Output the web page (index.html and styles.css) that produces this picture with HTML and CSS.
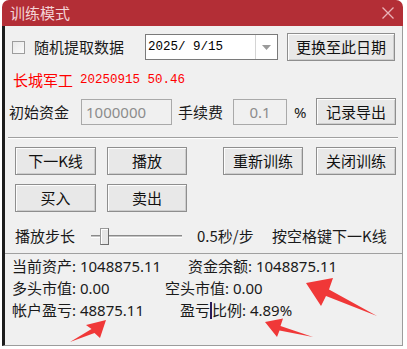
FILE: index.html
```html
<!DOCTYPE html>
<html lang="zh-CN">
<head>
    <meta charset="UTF-8">
    <title>训练模式</title>
    <link rel="stylesheet" href="styles.css">
</head>
<body>
    <div class="window">
        <div class="titlebar">
            <span class="title">训练模式</span>
            <svg class="close" width="12" height="12" viewBox="0 0 12 12">
                <path d="M0.5 0.5 L11.5 11.5 M11.5 0.5 L0.5 11.5" stroke="#e9b3b8" stroke-width="1.3" fill="none"/>
            </svg>
        </div>

        <div class="client">
            <div class="row row-date">
                <span class="checkbox"></span>
                <span class="label label-random">随机提取数据</span>
                <div class="combo">
                    <span class="combo-text">2025/ 9/15</span>
                    <span class="combo-btn">
                        <svg width="9" height="5" viewBox="0 0 9 5"><path d="M0 0 L9 0 L4.5 5 Z" fill="#9a9a9a"/></svg>
                    </span>
                </div>
                <button class="btn btn-date">更换至此日期</button>
            </div>

            <div class="row row-stock">
                <span class="stock-name">长城军工</span>
                <span class="stock-info">20250915 50.46</span>
            </div>

            <div class="row row-fund">
                <span class="label label-fund">初始资金</span>
                <span class="field field-fund">1000000</span>
                <span class="label label-fee">手续费</span>
                <span class="field field-fee">0.1</span>
                <span class="percent">%</span>
                <button class="btn btn-export">记录导出</button>
            </div>

            <div class="sep"></div>

            <div class="row row-btns">
                <button class="btn btn-action">下一K线</button>
                <button class="btn btn-action btn-second">播放</button>
                <button class="btn btn-action btn-restart">重新训练</button>
                <button class="btn btn-action btn-close">关闭训练</button>
            </div>

            <div class="row row-btns row-trade">
                <button class="btn btn-action">买入</button>
                <button class="btn btn-action btn-second">卖出</button>
            </div>

            <div class="row row-speed">
                <span class="label label-step">播放步长</span>
                <div class="slider">
                    <span class="track track-left"></span>
                    <span class="thumb"></span>
                    <span class="track track-right"></span>
                </div>
                <span class="speed-value">0.5秒/步</span>
                <span class="hint">按空格键下一K线</span>
            </div>

            <div class="panel">
                <div class="stat-row">
                    <span class="stat stat-a1">当前资产: 1048875.11</span>
                    <span class="stat">资金余额: 1048875.11</span>
                </div>
                <div class="stat-row">
                    <span class="stat stat-b1">多头市值: 0.00</span>
                    <span class="stat">空头市值: 0.00</span>
                </div>
                <div class="stat-row">
                    <span class="stat stat-c1">帐户盈亏: 48875.11</span>
                    <span class="stat">盈亏<span class="caret"></span>比例: 4.89%</span>
                </div>
            </div>
        </div>
    </div>

    <!-- annotation arrows drawn on top of the screenshot -->
    <svg class="arrows" width="407" height="349" viewBox="0 0 407 349">
        <polygon points="306,283 333,278 329,289.5 377,316 326,296 321,306" fill="#f03838"/>
        <polygon points="106,320 86,325 91.5,329 70,342 94.5,333 100,338" fill="#f03838"/>
        <polygon points="265,322 283,318.5 280.5,326 313,337 279.5,330.5 277,337" fill="#f03838"/>
    </svg>
</body>
</html>
```

FILE: styles.css
```css
* {
    margin: 0;
    padding: 0;
    box-sizing: border-box;
}

body {
    position: relative;
    width: 407px;
    height: 349px;
    background: #ffffff;
    font-family: "Noto Sans CJK SC", sans-serif;
    font-size: 15px;
    color: #1a1a1a;
    overflow: hidden;
}

.window {
    margin-left: 2px;
    width: 401px;
}

.titlebar {
    height: 26px;
    background: #b32e36;
    border-radius: 7px 7px 0 0;
    display: flex;
    align-items: center;
    padding-left: 8px;
    padding-right: 9px;
}

.title {
    color: #f3d4d7;
    font-size: 15px;
    line-height: 20px;
    flex: 1;
}

.close {
    display: block;
}

.client {
    height: 320px;
    background: #f0f0f0;
    border-left: 3px solid #1c1c1c;
    border-right: 1px solid #9c9c9c;
    border-bottom: 1px solid #9c9c9c;
    display: flex;
    flex-direction: column;
}

.row {
    display: flex;
    align-items: center;
}

.label {
    line-height: 20px;
    white-space: nowrap;
}

/* ---- date row ---- */
.row-date {
    margin-top: 7px;
    height: 28px;
}

.checkbox {
    width: 13px;
    height: 13px;
    margin-left: 7px;
    border: 1px solid #9d9d9d;
    background: linear-gradient(135deg, #e9e9e9, #fbfbfb);
}

.label-random {
    margin-left: 9px;
    width: 111px;
}

.combo {
    width: 133px;
    height: 26px;
    background: #ffffff;
    border: 1px solid #7a7a7a;
    display: flex;
    align-items: stretch;
}

.combo-text {
    flex: 1;
    padding-left: 2px;
    font-family: "Liberation Mono", monospace;
    font-size: 12.5px;
    line-height: 24px;
    color: #000;
}

.combo-btn {
    width: 22px;
    border-left: 1px solid #d4d4d4;
    display: flex;
    align-items: center;
    justify-content: center;
}

.combo-btn svg {
    display: block;
}

.btn {
    font-family: "Noto Sans CJK SC", sans-serif;
    font-size: 15px;
    line-height: 20px;
    color: #111;
    background: #e8e8e8;
    border: 1px solid #8e8e8e;
    box-shadow: inset 1px 1px 0 #fdfdfd, inset -1px -1px 0 #cdcdcd;
    text-align: center;
}

.btn-date {
    margin-left: 9px;
    width: 108px;
    height: 28px;
}

/* ---- stock row ---- */
.row-stock {
    margin-top: 7px;
    height: 24px;
    color: #ff0000;
}

.stock-name {
    margin-left: 8px;
    width: 67px;
    line-height: 20px;
}

.stock-info {
    font-family: "Liberation Mono", monospace;
    font-size: 12.5px;
    line-height: 20px;
}

/* ---- fund row ---- */
.row-fund {
    margin-top: 6px;
    height: 28px;
}

.label-fund {
    margin-left: 4px;
    width: 72px;
}

.field {
    height: 26px;
    border: 1px solid #a9a9a9;
    background: #f0f0f0;
    color: #8c8c8c;
    font-family: "Noto Sans", sans-serif;
    font-size: 15px;
    line-height: 24px;
}

.field-fund {
    width: 91px;
    padding-left: 4px;
}

.label-fee {
    margin-left: 6px;
    width: 55px;
}

.field-fee {
    width: 54px;
    text-align: center;
}

.percent {
    margin-left: 7px;
    width: 22px;
    font-family: "Noto Sans", sans-serif;
    line-height: 20px;
}

.btn-export {
    width: 80px;
    height: 27px;
    align-self: flex-start;
}

.sep {
    margin: 11px 0 0 3px;
    width: 390px;
    height: 2px;
    border-top: 1px solid #a0a0a0;
    border-bottom: 1px solid #ffffff;
}

/* ---- action buttons ---- */
.row-btns {
    margin-top: 8px;
    height: 28px;
}

.row-trade {
    margin-top: 9px;
}

.btn-action {
    width: 81px;
    height: 28px;
}

.row-btns .btn-action:first-child {
    margin-left: 10px;
}

.btn-second {
    margin-left: 11px;
    width: 80px;
}

.btn-restart {
    margin-left: 36px;
    width: 80px;
}

.btn-close {
    margin-left: 13px;
    width: 80px;
}

/* ---- speed row ---- */
.row-speed {
    margin-top: 14px;
    height: 20px;
}

.label-step {
    margin-left: 10px;
    width: 76px;
}

.slider {
    width: 91px;
    height: 20px;
    display: flex;
    align-items: center;
}

.track {
    height: 3px;
    border-top: 1px solid #8a8a8a;
    border-bottom: 1px solid #ffffff;
    background: #c4c4c4;
}

.track-left {
    width: 9px;
}

.track-right {
    flex: 1;
}

.thumb {
    width: 9px;
    height: 17px;
    background: #e6e6e6;
    border: 1px solid #9a9a9a;
    border-right-color: #6e6e6e;
    border-bottom-color: #6e6e6e;
    box-shadow: inset 1px 1px 0 #ffffff;
}

.speed-value {
    margin-left: 15px;
    width: 75px;
    line-height: 20px;
    white-space: nowrap;
}

.hint {
    line-height: 20px;
    white-space: nowrap;
}

/* ---- statistics panel ---- */
.panel {
    margin-top: 7px;
    flex: 1;
    border-top: 1px solid #a0a0a0;
    padding: 1px 0 0 7px;
    font-family: "Noto Sans", "Noto Sans CJK SC", sans-serif;
    font-size: 15px;
}

.stat-row {
    display: flex;
    height: 22px;
    align-items: center;
}

.stat {
    line-height: 20px;
    white-space: nowrap;
}

.stat-a1 {
    width: 176px;
}

.stat-b1 {
    width: 153px;
}

.stat-c1 {
    width: 168px;
}

.caret {
    display: inline-block;
    width: 2px;
    height: 17px;
    vertical-align: -3px;
    background: #2b1d5c;
}

.arrows {
    position: absolute;
    left: 0;
    top: 0;
    pointer-events: none;
}
```
